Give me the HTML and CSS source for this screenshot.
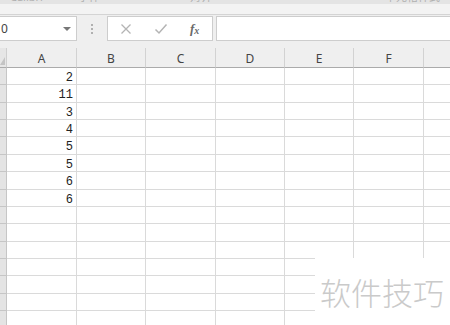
FILE: index.html
```html
<!DOCTYPE html>
<html>
<head>
<meta charset="utf-8">
<link rel="stylesheet" href="styles.css">
</head>
<body>
<div class="app">
  <div class="ribbon">
    <span class="rt rt1">Calibri</span>
    <span class="rt rt2">字体</span>
    <span class="rt rt3">对齐</span>
    <span class="rt rt4">单元格样式</span>
  </div>
  <div class="fbar">
    <div class="namebox">
      <span class="nb-text">0</span>
      <span class="nb-arrow"></span>
    </div>
    <div class="dots"><i></i><i></i><i></i></div>
    <div class="fbtns">
      <svg class="ic" width="14" height="14" viewBox="0 0 14 14"><path d="M2.5 2.5 L11.5 11.5 M11.5 2.5 L2.5 11.5" stroke="#b4b4b4" stroke-width="1.3" fill="none"/></svg>
      <svg class="ic" width="14" height="14" viewBox="0 0 14 14"><path d="M1.5 7.5 L5 11 L12.5 2.5" stroke="#b4b4b4" stroke-width="1.5" fill="none"/></svg>
      <span class="fx">f<span class="fxx">x</span></span>
    </div>
    <div class="finput"></div>
  </div>
  <div class="sheet">
    <div class="corner"><span class="tri"></span></div>
    <div class="ch">A</div><div class="ch">B</div><div class="ch">C</div><div class="ch">D</div><div class="ch">E</div><div class="ch">F</div><div class="ch last"></div>

    <div class="rh"></div><div class="c num">2</div><div class="c"></div><div class="c"></div><div class="c"></div><div class="c"></div><div class="c"></div><div class="c last"></div>
    <div class="rh"></div><div class="c num">11</div><div class="c"></div><div class="c"></div><div class="c"></div><div class="c"></div><div class="c"></div><div class="c last"></div>
    <div class="rh"></div><div class="c num">3</div><div class="c"></div><div class="c"></div><div class="c"></div><div class="c"></div><div class="c"></div><div class="c last"></div>
    <div class="rh"></div><div class="c num">4</div><div class="c"></div><div class="c"></div><div class="c"></div><div class="c"></div><div class="c"></div><div class="c last"></div>
    <div class="rh"></div><div class="c num">5</div><div class="c"></div><div class="c"></div><div class="c"></div><div class="c"></div><div class="c"></div><div class="c last"></div>
    <div class="rh"></div><div class="c num">5</div><div class="c"></div><div class="c"></div><div class="c"></div><div class="c"></div><div class="c"></div><div class="c last"></div>
    <div class="rh"></div><div class="c num">6</div><div class="c"></div><div class="c"></div><div class="c"></div><div class="c"></div><div class="c"></div><div class="c last"></div>
    <div class="rh"></div><div class="c num">6</div><div class="c"></div><div class="c"></div><div class="c"></div><div class="c"></div><div class="c"></div><div class="c last"></div>
    <div class="rh"></div><div class="c"></div><div class="c"></div><div class="c"></div><div class="c"></div><div class="c"></div><div class="c"></div><div class="c last"></div>
    <div class="rh"></div><div class="c"></div><div class="c"></div><div class="c"></div><div class="c"></div><div class="c"></div><div class="c"></div><div class="c last"></div>
    <div class="rh"></div><div class="c"></div><div class="c"></div><div class="c"></div><div class="c"></div><div class="c"></div><div class="c"></div><div class="c last"></div>
    <div class="rh"></div><div class="c"></div><div class="c"></div><div class="c"></div><div class="c"></div><div class="c"></div><div class="c"></div><div class="c last"></div>
    <div class="rh"></div><div class="c"></div><div class="c"></div><div class="c"></div><div class="c"></div><div class="c"></div><div class="c"></div><div class="c last"></div>
    <div class="rh"></div><div class="c"></div><div class="c"></div><div class="c"></div><div class="c"></div><div class="c"></div><div class="c"></div><div class="c last"></div>
    <div class="rh"></div><div class="c"></div><div class="c"></div><div class="c"></div><div class="c"></div><div class="c"></div><div class="c"></div><div class="c last"></div>
  </div>
  <div class="watermark">软件技巧</div>
</div>
</body>
</html>
```

FILE: styles.css
```css
html, body {
  margin: 0;
  padding: 0;
  background: #ffffff;
}
.app {
  position: relative;
  width: 450px;
  height: 325px;
  overflow: hidden;
  font-family: "Noto Sans", "Noto Sans CJK SC", sans-serif;
}
.ribbon {
  height: 15px;
  background: linear-gradient(#e4e4e4 0, #e4e4e4 4px, #f3f3f3 4px);
  border-bottom: 1px solid #d4d4d4;
  box-sizing: border-box;
  position: relative;
  overflow: hidden;
}
.rt {
  position: absolute;
  top: -9px;
  font-size: 11px;
  line-height: 12px;
  color: #b0b0b0;
}
.rt1 { left: 10px; }
.rt2 { left: 78px; }
.rt3 { left: 190px; }
.rt4 { left: 385px; }
.fbar {
  height: 33px;
  background: #efefef;
  display: flex;
  align-items: flex-start;
  padding-top: 1px;
  box-sizing: border-box;
}
.namebox {
  width: 77px;
  height: 25px;
  background: #fff;
  border: 1px solid #cdcdcd;
  border-left: none;
  box-sizing: border-box;
  display: flex;
  align-items: center;
  justify-content: space-between;
  padding: 0 5px 0 1px;
}
.nb-text {
  font-size: 12px;
  color: #444;
}
.nb-arrow {
  width: 0;
  height: 0;
  border-left: 4px solid transparent;
  border-right: 4px solid transparent;
  border-top: 4px solid #777;
}
.dots {
  width: 30px;
  height: 25px;
  display: flex;
  flex-direction: column;
  align-items: center;
  justify-content: center;
  gap: 2px;
}
.dots i {
  display: block;
  width: 2px;
  height: 2px;
  background: #b0b0b0;
}
.fbtns {
  width: 106px;
  height: 25px;
  background: #fff;
  border: 1px solid #cdcdcd;
  box-sizing: border-box;
  display: flex;
  align-items: center;
  padding-left: 11px;
  gap: 21px;
}
.fx {
  font-family: "Liberation Serif", serif;
  font-style: italic;
  font-weight: bold;
  font-size: 13px;
  color: #6a6a6a;
  line-height: 1;
  margin-left: 1px;
}
.fxx {
  font-size: 10px;
  position: relative;
  top: 1px;
}
.finput {
  flex: 1;
  height: 25px;
  margin-left: 3px;
  background: #fff;
  border: 1px solid #cdcdcd;
  border-right: none;
  box-sizing: border-box;
}
.sheet {
  display: grid;
  grid-template-columns: 7px 70px 69px 70px 69px 69px 70px 1fr;
  grid-template-rows: 20px;
  grid-auto-rows: 17.36px;
}
.corner {
  background: #e6e6e6;
  border-bottom: 1px solid #ababab;
  border-right: 1px solid #cfcfcf;
  box-sizing: border-box;
  position: relative;
}
.tri {
  position: absolute;
  right: 1px;
  bottom: 2px;
  width: 0;
  height: 0;
  border-left: 5px solid transparent;
  border-bottom: 8px solid #c4c4c4;
}
.ch {
  background: #efefef;
  border-bottom: 1px solid #ababab;
  border-right: 1px solid #d2d2d2;
  box-sizing: border-box;
  font-size: 12px;
  color: #444;
  text-align: center;
  line-height: 21px;
}
.ch.last { border-right: none; }
.rh {
  background: #e4e4e4;
  border-bottom: 1px solid #c6c6c6;
  border-right: 1px solid #c6c6c6;
  box-sizing: border-box;
}
.c {
  border-bottom: 1px solid #dadada;
  border-right: 1px solid #dadada;
  box-sizing: border-box;
}
.c.last { border-right: none; }
.num {
  font-family: "Liberation Mono", monospace;
  font-size: 12px;
  color: #222;
  text-align: right;
  padding-right: 3px;
  padding-top: 3px;
  line-height: 14px;
}
.watermark {
  position: absolute;
  left: 315px;
  top: 258px;
  width: 135px;
  height: 67px;
  background: #fff;
  font-family: "Noto Sans CJK SC", sans-serif;
  font-weight: 300;
  font-size: 31px;
  color: #cacaca;
  line-height: 67px;
  padding-left: 5px;
  box-sizing: border-box;
}
```
